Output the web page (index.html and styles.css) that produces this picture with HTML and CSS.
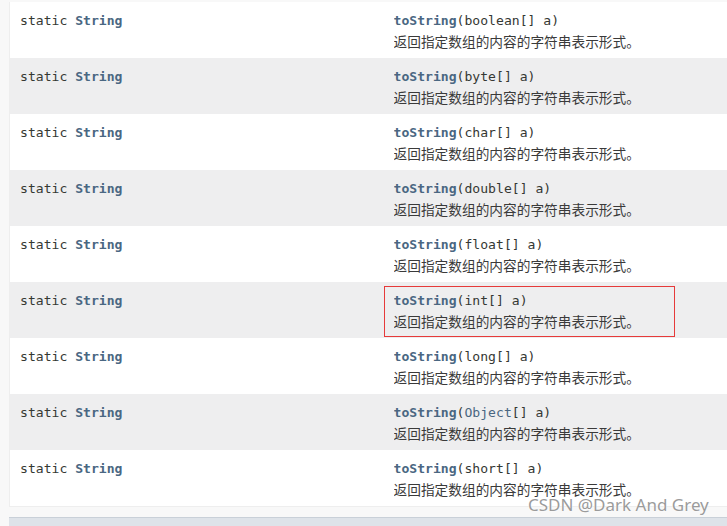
FILE: index.html
```html
<!DOCTYPE html>
<html lang="zh-CN">
<head>
<meta charset="utf-8">
<title>Arrays.toString</title>
<link rel="stylesheet" href="styles.css">
</head>
<body>
<div class="page">
  <table class="summary">
    <colgroup><col class="c1"><col class="c2"></colgroup>
    <tbody>
      <tr class="alt"><td class="first"><code>static <a>String</a></code></td><td class="last"><code><a class="name">toString</a>(boolean[] a)</code><div class="block">返回指定数组的内容的字符串表示形式。</div></td></tr>
      <tr class="row"><td class="first"><code>static <a>String</a></code></td><td class="last"><code><a class="name">toString</a>(byte[] a)</code><div class="block">返回指定数组的内容的字符串表示形式。</div></td></tr>
      <tr class="alt"><td class="first"><code>static <a>String</a></code></td><td class="last"><code><a class="name">toString</a>(char[] a)</code><div class="block">返回指定数组的内容的字符串表示形式。</div></td></tr>
      <tr class="row"><td class="first"><code>static <a>String</a></code></td><td class="last"><code><a class="name">toString</a>(double[] a)</code><div class="block">返回指定数组的内容的字符串表示形式。</div></td></tr>
      <tr class="alt"><td class="first"><code>static <a>String</a></code></td><td class="last"><code><a class="name">toString</a>(float[] a)</code><div class="block">返回指定数组的内容的字符串表示形式。</div></td></tr>
      <tr class="row"><td class="first"><code>static <a>String</a></code></td><td class="last marked"><code><a class="name">toString</a>(int[] a)</code><div class="block">返回指定数组的内容的字符串表示形式。</div><span class="redbox"></span></td></tr>
      <tr class="alt"><td class="first"><code>static <a>String</a></code></td><td class="last"><code><a class="name">toString</a>(long[] a)</code><div class="block">返回指定数组的内容的字符串表示形式。</div></td></tr>
      <tr class="row"><td class="first"><code>static <a>String</a></code></td><td class="last"><code><a class="name">toString</a>(<a class="type">Object</a>[] a)</code><div class="block">返回指定数组的内容的字符串表示形式。</div></td></tr>
      <tr class="alt"><td class="first"><code>static <a>String</a></code></td><td class="last"><code><a class="name">toString</a>(short[] a)</code><div class="block">返回指定数组的内容的字符串表示形式。</div></td></tr>
    </tbody>
  </table>
  <div class="nextbar"></div>
  <div class="watermark">CSDN @Dark And Grey</div>
</div>
</body>
</html>
```
FILE: styles.css
```css
html, body {
  margin: 0;
  padding: 0;
  background: #f8f8f8;
  overflow: hidden;
}
.page {
  position: relative;
  width: 727px;
  height: 526px;
  padding: 2px 0 0 9px;
  box-sizing: border-box;
}
.summary {
  border-collapse: collapse;
  width: 718px;
  border-left: 1px solid #eeeeee;
  border-bottom: 1px solid #eeeeee;
  table-layout: fixed;
}
.c1 { width: 375px; }
.c2 { width: 343px; }
.summary tr.alt { background: #ffffff; }
.summary tr.row { background: #eeeeef; }
.summary td {
  padding: 7px 0 5px 10px;
  vertical-align: top;
  color: #353833;
  line-height: 22px;
}
.summary td.last { padding-left: 9px; position: relative; }
code {
  display: block;
  height: 22px;
  line-height: 23px;
  overflow: hidden;
  font-family: "DejaVu Sans Mono", monospace;
  font-size: 13.1px;
  color: #353833;
  white-space: nowrap;
}
.first a {
  color: #4a6782;
  font-weight: bold;
}
a.name {
  color: #4a6782;
  font-weight: bold;
}
a.type {
  color: #4a6782;
}
.block {
  display: block;
  height: 22px;
  line-height: 21px;
  overflow: hidden;
  font-family: "Noto Sans CJK SC", "Noto Sans", sans-serif;
  font-size: 13.7px;
  color: #3a3a3a;
  white-space: nowrap;
}
.redbox {
  position: absolute;
  left: -1px;
  top: 4px;
  width: 289px;
  height: 49px;
  border: 1px solid #e63a3a;
}
.nextbar {
  margin-top: 10px;
  height: 12px;
  background: #dee3e9;
  border-top: 1px solid #c9d0d8;
}
.watermark {
  position: absolute;
  left: 528px;
  top: 493px;
  font-family: "Noto Sans", sans-serif;
  font-size: 17px;
  color: #9b9b9b;
  text-shadow: 0 0 2px #ffffff, 0 0 1px #ffffff;
  white-space: nowrap;
}
```
